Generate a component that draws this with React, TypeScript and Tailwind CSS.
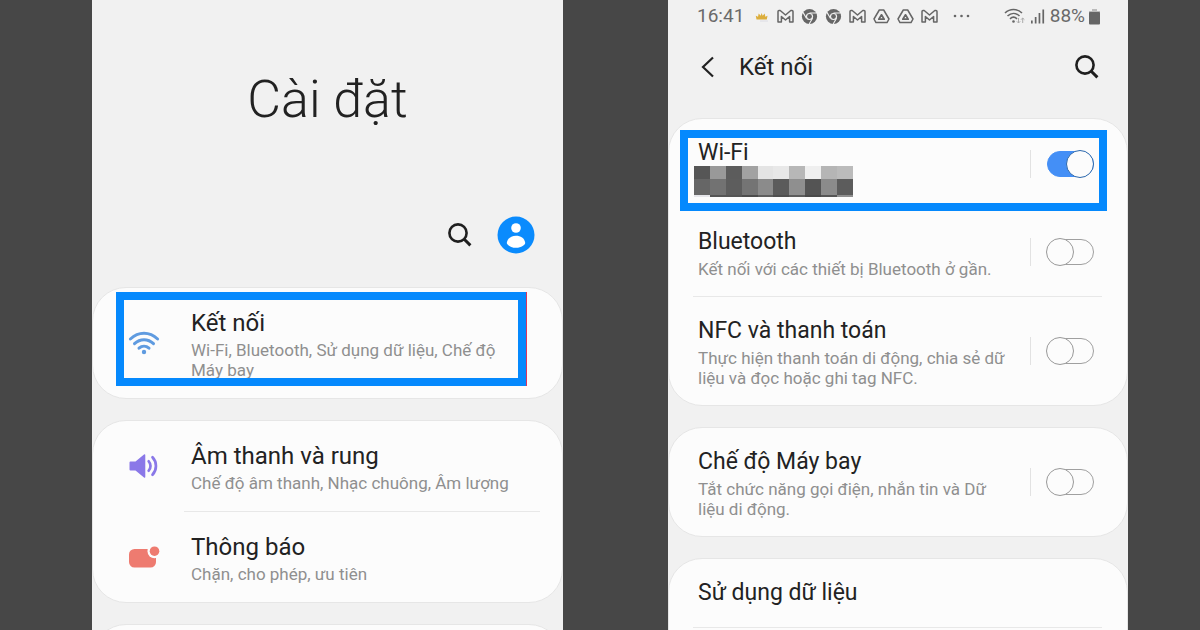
import { useState } from "react";
import type { ReactNode } from "react";

type ToggleItem = {
  id: string;
  title: string;
  description?: string;
};

const SearchIcon = () => (
  <svg width="24" height="24" viewBox="0 0 24 24" fill="none" stroke="#1f1f1f">
    <circle cx="10" cy="10" r="8.6" strokeWidth="2.6" />
    <path d="M16 16l6.4 6.4" strokeWidth="3" />
  </svg>
);

const AvatarIcon = () => (
  <svg width="38" height="38" viewBox="0 0 38 38">
    <circle cx="19" cy="19" r="18.5" fill="#0a8bfd" />
    <circle cx="19" cy="12" r="4.8" fill="#fff" />
    <path
      d="M9.800 26.800c.6-4.400 4.600-7 9.200-7s8.600 2.600 9.200 7c.2 1.500-3.700 5-9.200 5s-9.400-3.500-9.200-5z"
      fill="#fff"
    />
  </svg>
);

const WifiIcon = () => (
  <svg
    width="32"
    height="24"
    viewBox="0 0 32 24"
    fill="none"
    stroke="#5f9be0"
    strokeWidth="3"
    strokeLinecap="round"
  >
    <path d="M2.400 8C10.500.4 21.500.4 29.600 8" />
    <path d="M6.500 12.700c5.600-5.300 13.400-5.300 19 0" />
    <path d="M11 17.200c3-2.700 7-2.700 10 0" />
    <circle cx="16" cy="21" r="2.200" fill="#5f9be0" stroke="none" />
  </svg>
);

const SoundIcon = () => (
  <svg width="30" height="26" viewBox="0 0 30 26">
    <path
      d="M2.500 8.500h5L16 1.600q1.300-.8 1.300.6v21.600q0 1.400-1.300.6L7.500 17.500h-5q-1 0-1-1v-7q0-1 1-1z"
      fill="#8a78e8"
    />
    <g fill="none" stroke="#8a78e8" strokeWidth="2.700" strokeLinecap="round">
      <path d="M20.700 8.300c2.400 2.600 2.400 6.800 0 9.400" />
      <path d="M24.500 4.300c4.600 4.800 4.600 12.600 0 17.400" />
    </g>
  </svg>
);

const NotificationIcon = () => (
  <svg width="32" height="24" viewBox="0 0 32 24">
    <rect x="1" y="4" width="27" height="18.500" rx="5.500" fill="#ee7b70" />
    <circle cx="26.500" cy="6.200" r="7" fill="#fcfcfc" />
    <circle cx="26.500" cy="6.200" r="4.800" fill="#ee7b70" />
  </svg>
);

const SunIcon = () => (
  <svg width="17" height="17" viewBox="0 0 17 17">
    <path
      d="M3.500 11.500L2.800 7.800 5 8.800 5.700 5.500l2 2.200.9-2.800 1.100 2.800 2-2.200.6 3.300 2.200-1-.7 3.700z"
      fill="#dcae3c"
    />
    <path d="M7 13h8" stroke="#dcdce4" />
  </svg>
);

const MailIcon = () => (
  <svg
    width="17"
    height="17"
    viewBox="0 0 17 17"
    fill="none"
    stroke="#666"
    strokeWidth="1.500"
    strokeLinejoin="round"
  >
    <path d="M1 14V3.500q0-1 1-1h1.200L8.500 7l5.300-4.500H15q1 0 1 1V14h-3.400V8.500L8.500 12 4.400 8.500V14z" />
  </svg>
);

const ChromeIcon = () => (
  <svg width="17" height="17" viewBox="0 0 17 17">
    <circle cx="8.500" cy="8.500" r="7.600" fill="#666" />
    <circle cx="8.500" cy="8.500" r="3.600" fill="#f1f1f1" />
    <circle cx="8.500" cy="8.500" r="2.400" fill="#666" />
    <path
      d="M8.500 5h7M5.400 10.200L2 4.400M11.500 10.200L8.200 16"
      stroke="#f1f1f1"
      strokeWidth="1.100"
    />
  </svg>
);

const DriveIcon = () => (
  <svg
    width="17"
    height="17"
    viewBox="0 0 17 17"
    fill="none"
    stroke="#666"
    strokeWidth="1.500"
    strokeLinejoin="round"
  >
    <path d="M6.300 2h4.400l5.300 9-2 3.600H3L1 11z" />
    <path d="M8.500 6.800l2.700 4.400H5.800z" strokeWidth="1.700" />
  </svg>
);

const StatusWifiIcon = () => (
  <svg width="22" height="17" viewBox="0 0 22 17" fill="none" stroke="#666">
    <g strokeWidth="1.600">
      <path d="M1 5c5-4.700 12-4.700 17 0" />
      <path d="M3.500 8c3.600-3.300 8.400-3.300 12 0" />
      <path d="M6 10.800c2.200-2 4.800-2 7 0" />
    </g>
    <circle cx="9.500" cy="13.500" r="1.300" fill="#666" stroke="none" />
    <path
      d="M14.500 10v5m-1.700-1.700l1.700 1.700 1.700-1.700M18.700 15v-5M17 11.700l1.700-1.700 1.700 1.700"
      stroke="#aaa"
    />
  </svg>
);

const SignalIcon = () => (
  <svg width="16" height="17" viewBox="0 0 16 17" fill="#666">
    <rect x="1" y="12.500" width="1.700" height="3" />
    <rect x="4.800" y="9" width="1.700" height="6.500" />
    <rect x="8.600" y="5" width="1.700" height="10.500" />
    <rect x="12.400" y="1.500" width="1.700" height="14" />
  </svg>
);

const BatteryIcon = () => (
  <svg width="11" height="17" viewBox="0 0 11 17">
    <path d="M3 1h5v2h3v3H0V3h3z" fill="#bbb" />
    <rect y="4" width="11" height="12.500" rx="1" fill="#666" />
  </svg>
);

// blurred-out network name
const mosaic = [
  "#565656", "#999999", "#5c5c5c", "#a2a2a2", "#e4e4e4", "#e8e8e8", "#b7b7b7", "#efefef", "#b5b5b5", "#bbbbbb",
  "#666666", "#727272", "#5d5d5d", "#747474", "#8b8b8b", "#5b5b5b", "#8f8f8f", "#545454", "#8b8b8b", "#5c5c5c",
  "#e6e6ea", "#555555", "#555555", "#4c4c4c", "#5e5e5e", "#4f4f4f", "#5c5c5c", "#4a4a4a", "#555555", "#8f8f8f",
];

const HiddenNetwork = () => (
  <div className="-mt-1 -mb-1.5 -ml-1 grid w-[159px] grid-cols-10 grid-rows-[13px_16px_2px]">
    {mosaic.map((color, i) => (
      <span key={i} style={{ backgroundColor: color }} />
    ))}
  </div>
);

const Card = ({ children }: { children: ReactNode }) => (
  <section className="relative rounded-[34px] border border-[#e6e6e6] bg-[#fcfcfc]">
    {children}
  </section>
);

const SettingRow = ({
  icon,
  title,
  description,
}: {
  icon: ReactNode;
  title: string;
  description: string;
}) => (
  <a href="#" className="flex items-center py-[18px] pr-12 pl-[35px]">
    <span className="flex w-[63px] shrink-0">{icon}</span>
    <span className="block">
      <span className="block text-2xl leading-[34px] text-[#222]">{title}</span>
      <span className="block text-[17px] leading-5 text-[#8f8f8f]">
        {description}
      </span>
    </span>
  </a>
);

const ToggleRow = ({
  item,
  checked,
  onChange,
  children,
}: {
  item: ToggleItem;
  checked: boolean;
  onChange: () => void;
  children?: ReactNode;
}) => (
  <div className="flex items-center py-[17px] pr-[33px] pl-[29px]">
    <label htmlFor={item.id} className="block flex-1 pr-4">
      <span className="block text-[23px] leading-[34px] text-[#222]">
        {item.title}
      </span>
      {item.description && (
        <span className="block text-[17px] leading-5 text-[#8f8f8f]">
          {item.description}
        </span>
      )}
      {children}
    </label>
    <span className="mr-[15px] h-7 w-px shrink-0 bg-[#e2e2e2]" />
    <input
      id={item.id}
      type="checkbox"
      checked={checked}
      onChange={onChange}
      className="relative h-7 w-12 shrink-0 cursor-pointer appearance-none before:absolute before:inset-y-px before:right-0 before:left-px before:rounded-full before:border before:border-[#a0a0a0] after:absolute after:top-0 after:left-0 after:size-7 after:rounded-full after:border after:border-[#999] after:bg-[#fcfcfc] checked:before:border-[#448ff6] checked:before:bg-[#448ff6] checked:after:left-5 checked:after:border-[#2c68ac]"
    />
  </div>
);

const SettingsScreen = () => (
  <main className="col-start-2 overflow-hidden bg-[#f1f1f1]">
    <h1 className="pt-[68px] text-center text-[52px] leading-16 font-light text-[#222]">
      Cài đặt
    </h1>
    <div className="mt-[84px] mb-[33px] flex items-center justify-end gap-[25px] pr-7">
      <button type="button" aria-label="Tìm kiếm">
        <SearchIcon />
      </button>
      <button type="button" aria-label="Tài khoản">
        <AvatarIcon />
      </button>
    </div>
    <div className="flex flex-col gap-[21px]">
      <Card>
        <SettingRow
          icon={<WifiIcon />}
          title="Kết nối"
          description="Wi-Fi, Bluetooth, Sử dụng dữ liệu, Chế độ Máy bay"
        />
        <div className="pointer-events-none absolute top-1 right-9 bottom-3 left-[23px] border-8 border-[#0589fd] shadow-[1px_0_0_#d9365f]" />
      </Card>
      <Card>
        <SettingRow
          icon={<SoundIcon />}
          title="Âm thanh và rung"
          description="Chế độ âm thanh, Nhạc chuông, Âm lượng"
        />
        <hr className="mr-[22px] ml-[91px] border-[#e8e8e8]" />
        <SettingRow
          icon={<NotificationIcon />}
          title="Thông báo"
          description="Chặn, cho phép, ưu tiên"
        />
      </Card>
      <Card>
        <div className="h-20" />
      </Card>
    </div>
  </main>
);

const StatusBar = () => (
  <div className="flex h-8 items-center pr-7 pl-[29px] text-[19px] text-[#6a6a6a]">
    <span>16:41</span>
    <div className="ml-[9px] flex items-center gap-[7px]">
      <SunIcon />
      <MailIcon />
      <ChromeIcon />
      <ChromeIcon />
      <MailIcon />
      <DriveIcon />
      <DriveIcon />
      <MailIcon />
    </div>
    <svg className="ml-3.5" width="20" height="4" viewBox="0 0 20 4" fill="#666">
      <circle cx="3" cy="2" r="1.300" />
      <circle cx="9.500" cy="2" r="1.300" />
      <circle cx="16" cy="2" r="1.300" />
    </svg>
    <div className="ml-auto flex items-center gap-1">
      <StatusWifiIcon />
      <SignalIcon />
      <span>88%</span>
      <BatteryIcon />
    </div>
  </div>
);

const ConnectionsScreen = () => {
  const [enabled, setEnabled] = useState<Record<string, boolean>>({
    wifi: true,
  });

  const toggle = (id: string) => {
    setEnabled((prev) => ({ ...prev, [id]: !prev[id] }));
  };

  const renderRow = (item: ToggleItem, children?: ReactNode) => (
    <ToggleRow
      item={item}
      checked={!!enabled[item.id]}
      onChange={() => toggle(item.id)}
    >
      {children}
    </ToggleRow>
  );

  return (
    <main className="col-start-4 overflow-hidden bg-[#f1f1f1]">
      <StatusBar />
      <header className="flex h-[86px] items-center pr-[29px] pb-4 pl-8">
        <button type="button" aria-label="Quay lại">
          <svg
            width="16"
            height="22"
            viewBox="0 0 16 22"
            fill="none"
            stroke="#222"
            strokeWidth="2.200"
          >
            <path d="M13 1.500L3 11l10 9.500" />
          </svg>
        </button>
        <h2 className="ml-[23px] text-2xl text-[#222]">Kết nối</h2>
        <button type="button" aria-label="Tìm kiếm" className="ml-auto">
          <SearchIcon />
        </button>
      </header>
      <div className="flex flex-col gap-[21px]">
        <Card>
          <div className="relative">
            {renderRow({ id: "wifi", title: "Wi-Fi" }, <HiddenNetwork />)}
            <div className="pointer-events-none absolute top-[11px] right-5 -bottom-[3px] left-[11px] border-8 border-[#0589fd]" />
          </div>
          {renderRow({
            id: "bluetooth",
            title: "Bluetooth",
            description: "Kết nối với các thiết bị Bluetooth ở gần.",
          })}
          <hr className="mr-[25px] ml-6 border-[#e8e8e8]" />
          {renderRow({
            id: "nfc",
            title: "NFC và thanh toán",
            description:
              "Thực hiện thanh toán di động, chia sẻ dữ liệu và đọc hoặc ghi tag NFC.",
          })}
        </Card>
        <Card>
          {renderRow({
            id: "airplane",
            title: "Chế độ Máy bay",
            description: "Tắt chức năng gọi điện, nhắn tin và Dữ liệu di động.",
          })}
        </Card>
        <Card>
          <a
            href="#"
            className="block py-[17px] pl-[29px] text-[23px] leading-[34px] text-[#222]"
          >
            Sử dụng dữ liệu
          </a>
          <hr className="mr-[25px] ml-6 border-[#e8e8e8]" />
          <div className="h-20" />
        </Card>
      </div>
    </main>
  );
};

const App = () => {
  return (
    <div className="grid h-screen grid-cols-[92fr_471fr_105fr_460fr_72fr] overflow-hidden bg-[#474747] font-['Roboto',sans-serif]">
      <SettingsScreen />
      <ConnectionsScreen />
    </div>
  );
};

export default App;
